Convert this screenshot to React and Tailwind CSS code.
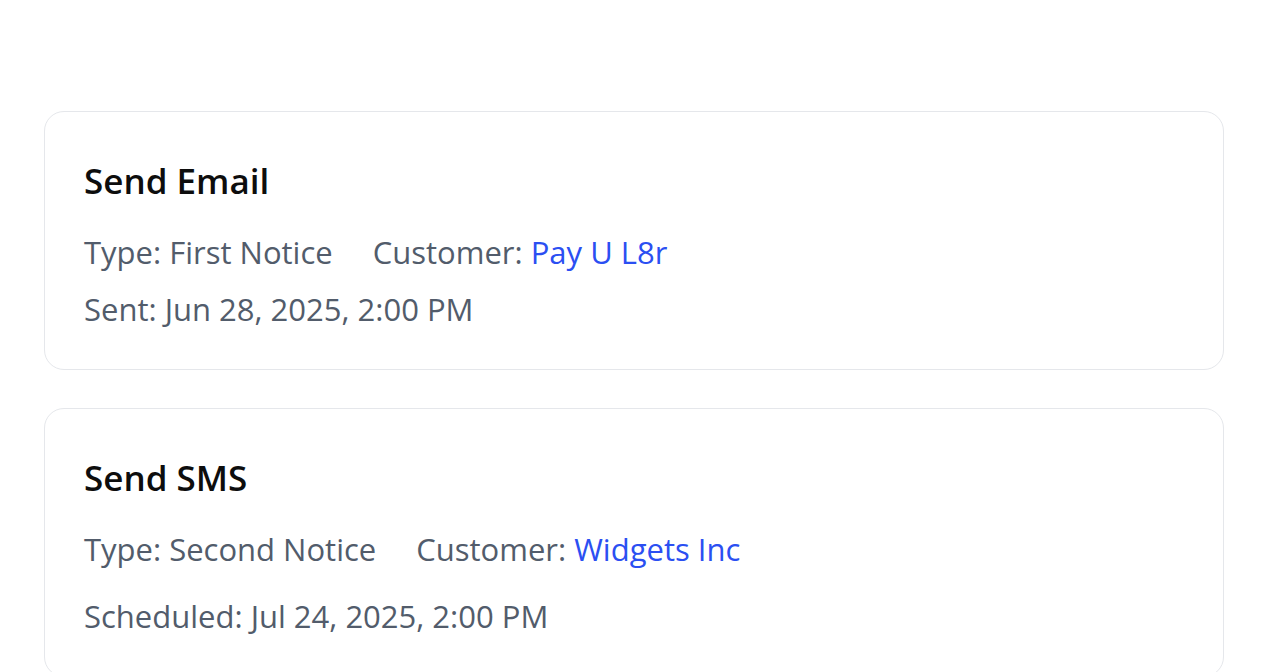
import React from "react";

const notices = [
  {
    title: "Send Email",
    type: "First Notice",
    customer: "Pay U L8r",
    dateLabel: "Sent",
    date: "Jun 28, 2025, 2:00 PM",
    dateGap: "mt-[17px]",
  },
  {
    title: "Send SMS",
    type: "Second Notice",
    customer: "Widgets Inc",
    dateLabel: "Scheduled",
    date: "Jul 24, 2025, 2:00 PM",
    dateGap: "mt-[27px]",
  },
];

const NoticeCard = ({ notice }) => {
  return (
    <div className="rounded-[20px] border border-[#e5e7eb] bg-white px-[39px] pt-[49px] pb-[40px]">
      <h3 className="text-[35px] leading-[40px] font-semibold text-[#0d0d0d]">{notice.title}</h3>
      <div className="mt-[31px] flex gap-[40px] text-[31px] leading-[40px] text-[#525c6b]">
        <span>Type: {notice.type}</span>
        <span>
          Customer: <span className="text-[#2b4ff2]">{notice.customer}</span>
        </span>
      </div>
      <div className={`${notice.dateGap} text-[31px] leading-[40px] text-[#525c6b]`}>
        {notice.dateLabel}: {notice.date}
      </div>
    </div>
  );
};

export default function App() {
  return (
    <div className="min-h-screen bg-white pl-[44px] pr-[40px] pt-[111px] font-['Open_Sans',sans-serif]">
      <div className="flex flex-col gap-[38px]">
        {notices.map((n) => (
          <NoticeCard key={n.title} notice={n} />
        ))}
      </div>
    </div>
  );
}
